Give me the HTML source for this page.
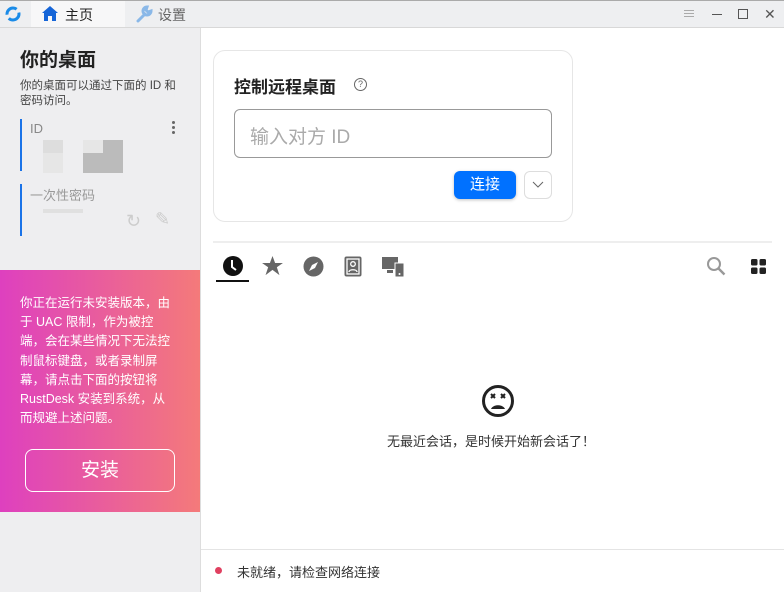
<!DOCTYPE html><html><head><meta charset="utf-8"><style>
*{box-sizing:border-box;margin:0;padding:0}
body{width:784px;height:592px;overflow:hidden;background:#fff;font-family:"Liberation Sans","Noto Sans CJK SC",sans-serif;position:relative;color:#222}
.abs{position:absolute}
</style></head><body>
<div class="abs" style="left:0;top:0;width:784px;height:28px;background:#eeeff1;border-bottom:1px solid #d8d8d8;border-top:1px solid #aaa"></div>
<svg class="abs" style="left:4px;top:5px" width="18" height="18" viewBox="0 0 18 18"><circle cx="9" cy="9" r="6" fill="none" stroke="#1a8be8" stroke-width="3" stroke-dasharray="14 4"/></svg>
<div class="abs" style="left:31px;top:1px;width:94px;height:26px;background:#f7f7f8"></div>
<svg class="abs" style="left:42px;top:6px" width="16" height="15" viewBox="0 0 16 15"><path d="M8 0L0 7h2v8h4V10h4v5h4V7h2z" fill="#1565d8"/></svg>
<div class="abs" style="left:65px;top:5px;font-size:14px;color:#222">主页</div>
<svg class="abs" style="left:135px;top:5px" width="18" height="18" viewBox="0 0 18 18"><path d="M3 16L10 9M12 2a4 4 0 1 0 4 4l-3 1-2-2 1-3z" stroke="#8ab8e8" stroke-width="3" fill="none" stroke-linecap="round"/></svg>
<div class="abs" style="left:158px;top:5px;font-size:14px;color:#666">设置</div>
<div class="abs" style="left:684px;top:10px;width:10px;height:1px;background:#aaa;box-shadow:0 3px 0 #aaa,0 6px 0 #aaa"></div>
<div class="abs" style="left:712px;top:14px;width:10px;height:1px;background:#555"></div>
<div class="abs" style="left:738px;top:9px;width:10px;height:10px;border:1px solid #555"></div>
<div class="abs" style="left:764px;top:6px;font-size:14px;color:#555">✕</div>
<div class="abs" style="left:0;top:28px;width:201px;height:564px;background:#eeeef0;border-right:1px solid #ddd"></div>
<div class="abs" style="left:20px;top:45px;font-size:19px;font-weight:bold;color:#222">你的桌面</div>
<div class="abs" style="left:20px;top:79px;font-size:11.5px;line-height:15px;color:#444;width:164px">你的桌面可以通过下面的 ID 和<br>密码访问。</div>
<div class="abs" style="left:20px;top:119px;width:2px;height:52px;background:#1a73e8"></div>
<div class="abs" style="left:30px;top:121px;font-size:13px;color:#888">ID</div>
<div class="abs" style="left:172px;top:121px;width:3px;height:3px;background:#666;border-radius:50%;box-shadow:0 5px 0 #666,0 10px 0 #666"></div>
<div class="abs" style="left:43px;top:140px;width:20px;height:13px;background:#ddd"></div>
<div class="abs" style="left:43px;top:153px;width:20px;height:20px;background:#e6e6e6"></div>
<div class="abs" style="left:83px;top:140px;width:20px;height:13px;background:#e6e6e6"></div>
<div class="abs" style="left:103px;top:140px;width:20px;height:33px;background:#bbb"></div>
<div class="abs" style="left:83px;top:153px;width:20px;height:20px;background:#bbb"></div>
<div class="abs" style="left:20px;top:184px;width:2px;height:52px;background:#1a73e8"></div>
<div class="abs" style="left:30px;top:185px;font-size:13px;color:#999">一次性密码</div>
<div class="abs" style="left:43px;top:209px;width:40px;height:4px;background:#e0e0e0"></div>
<div class="abs" style="left:126px;top:211px;font-size:18px;color:#ccc">↻</div>
<div class="abs" style="left:155px;top:209px;font-size:18px;color:#ccc">✎</div>
<div class="abs" style="left:0;top:270px;width:200px;height:242px;background:linear-gradient(90deg,#de40bf,#f47a7a)"></div>
<div class="abs" style="left:20px;top:294px;font-size:12.5px;line-height:19.2px;color:#fff;white-space:nowrap">你正在运行未安装版本，由<br>于 UAC 限制，作为被控<br>端，会在某些情况下无法控<br>制鼠标键盘，或者录制屏<br>幕，请点击下面的按钮将<br>RustDesk 安装到系统，从<br>而规避上述问题。</div>
<div class="abs" style="left:25px;top:449px;width:150px;height:43px;border:1px solid #fff;border-radius:8px;color:#fff;font-size:19px;text-align:center;line-height:41px">安装</div>
<div class="abs" style="left:213px;top:50px;width:360px;height:172px;border:1px solid #e6e6e6;border-radius:12px"></div>
<div class="abs" style="left:234px;top:73px;font-size:17px;font-weight:bold;color:#222">控制远程桌面</div>
<div class="abs" style="left:354px;top:78px;width:13px;height:13px;border:1px solid #666;border-radius:50%;font-size:9px;line-height:11px;text-align:center;color:#666">?</div>
<div class="abs" style="left:234px;top:109px;width:318px;height:49px;border:1px solid #999;border-radius:6px;padding:12px 15px;font-size:19px;color:#aaa">输入对方 ID</div>
<div class="abs" style="left:454px;top:171px;width:62px;height:28px;background:#0071ff;border-radius:6px;color:#fff;font-size:15px;text-align:center;line-height:28px;box-shadow:0 1px 3px rgba(0,0,0,.25)">连接</div>
<div class="abs" style="left:524px;top:171px;width:28px;height:28px;border:1px solid #ddd;border-radius:6px"></div>
<svg class="abs" style="left:532px;top:181px" width="12" height="8" viewBox="0 0 12 8"><path d="M1 1l5 5 5-5" stroke="#666" fill="none"/></svg>
<div class="abs" style="left:213px;top:241px;width:559px;height:2px;background:#eee"></div>
<svg class="abs" style="left:222px;top:255px" width="22" height="22" viewBox="0 0 22 22"><circle cx="11" cy="11" r="10" fill="#111"/><path d="M10 5v7l4 3" stroke="#fff" stroke-width="2" fill="none"/></svg>
<div class="abs" style="left:216px;top:280px;width:33px;height:2px;background:#111"></div>
<svg class="abs" style="left:262px;top:256px" width="21" height="20" viewBox="0 0 24 23"><path d="M12 0l3 8h9l-7 5 3 9-8-6-8 6 3-9-7-5h9z" fill="#666"/></svg>
<svg class="abs" style="left:303px;top:256px" width="21" height="21" viewBox="0 0 21 21"><circle cx="10.5" cy="10.5" r="10" fill="#666"/><path d="M15 6l-3 6-6 3 3-6z" fill="#fff"/></svg>
<svg class="abs" style="left:344px;top:256px" width="18" height="21" viewBox="0 0 18 21"><rect x="0.5" y="0.5" width="17" height="20" rx="2" fill="#666"/><rect x="3" y="3" width="12" height="15" fill="none" stroke="#fff" stroke-width="1.3"/><circle cx="9" cy="8" r="2.3" fill="none" stroke="#fff" stroke-width="1.3"/><path d="M5 16c0-3 8-3 8 0" stroke="#fff" stroke-width="1.3" fill="none"/></svg>
<svg class="abs" style="left:382px;top:257px" width="22" height="20" viewBox="0 0 22 20"><rect x="0" y="0" width="16" height="12" fill="#666"/><rect x="5" y="13" width="6" height="3" fill="#666"/><rect x="13" y="6" width="9" height="14" fill="#666" stroke="#fff"/><circle cx="17.5" cy="17" r="1" fill="#fff"/></svg>
<svg class="abs" style="left:706px;top:256px" width="20" height="20" viewBox="0 0 20 20"><circle cx="8" cy="8" r="6" stroke="#999" stroke-width="2" fill="none"/><path d="M12.5 12.5l6 6" stroke="#999" stroke-width="2.4"/></svg>
<svg class="abs" style="left:751px;top:259px" width="15" height="15" viewBox="0 0 15 15"><rect x="0" y="0" width="6.5" height="6.5" rx="1.5" fill="#222"/><rect x="8.5" y="0" width="6.5" height="6.5" rx="1.5" fill="#222"/><rect x="0" y="8.5" width="6.5" height="6.5" rx="1.5" fill="#222"/><rect x="8.5" y="8.5" width="6.5" height="6.5" rx="1.5" fill="#222"/></svg>
<svg class="abs" style="left:481px;top:384px" width="34" height="34" viewBox="0 0 34 34"><circle cx="17" cy="17" r="14.5" stroke="#222" stroke-width="3" fill="none"/><path d="M10 10l4 4M14 10l-4 4M20 10l4 4M24 10l-4 4" stroke="#222" stroke-width="2"/><path d="M10 25c2-5 12-5 14 0z" fill="#222"/></svg>
<div class="abs" style="left:387px;top:431px;font-size:13px;color:#333">无最近会话，是时候开始新会话了！</div>
<div class="abs" style="left:201px;top:549px;width:583px;height:1px;background:#e4e4e4"></div>
<div class="abs" style="left:215px;top:567px;width:7px;height:7px;border-radius:50%;background:#e04060"></div>
<div class="abs" style="left:237px;top:562px;font-size:13px;color:#333">未就绪，请检查网络连接</div>
</body></html>
